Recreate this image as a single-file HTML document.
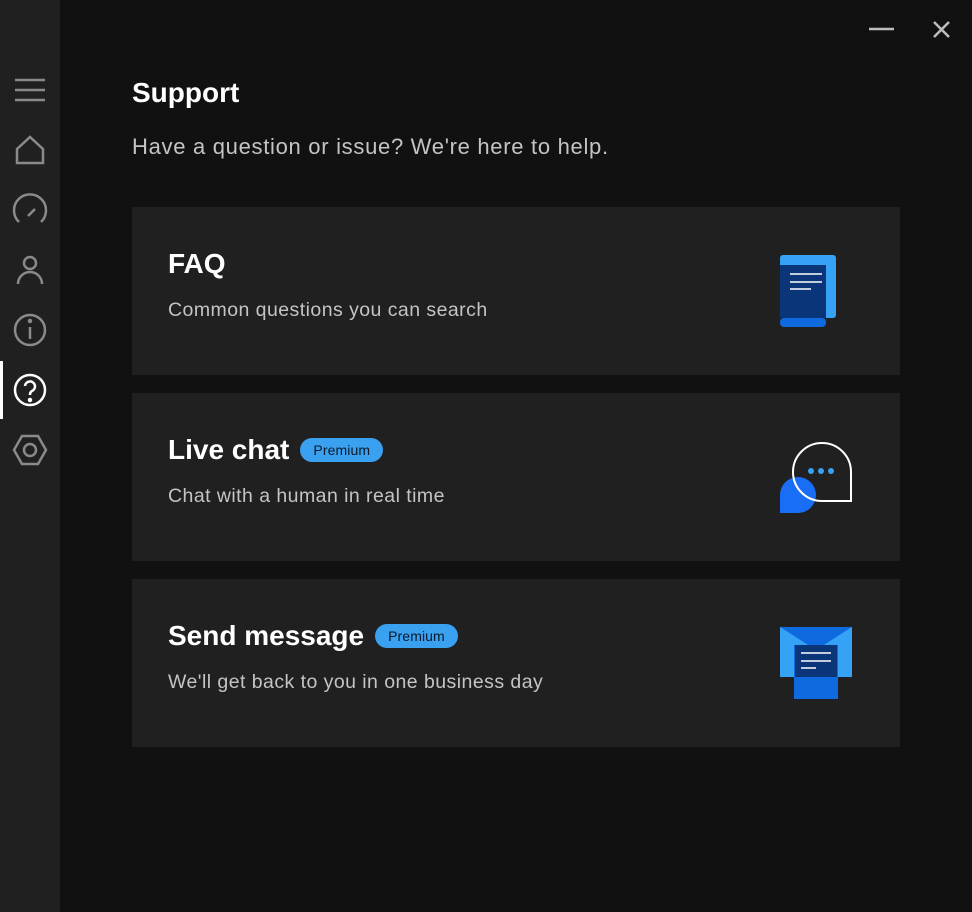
<!DOCTYPE html>
<html><head><meta charset="utf-8"><style>
body{margin:0;width:972px;height:912px;background:#111111;font-family:"Segoe UI","Liberation Sans",sans-serif;position:relative;overflow:hidden;color:#fff}
.side{position:absolute;left:0;top:0;width:60px;height:912px;background:#202020}
.card{position:absolute;left:132px;width:768px;height:168px;background:#202020}
.card h2{position:absolute;left:36px;top:41px;margin:0;font-size:28px;font-weight:600;display:flex;align-items:center}
.card p{position:absolute;left:36px;top:92px;margin:0;font-size:19.5px;color:#c4c4c4;letter-spacing:0.45px}
.badge{display:inline-block;background:#3aa0f0;color:#0b1a2a;font-size:14px;font-weight:400;border-radius:13px;padding:4px 13px;margin-left:11px;letter-spacing:0.1px}
svg{position:absolute}
</style></head><body>
<div class="side"></div>
<div style="position:absolute;left:0;top:361px;width:3px;height:58px;background:#fff"></div>
<svg style="left:0;top:0" width="60" height="480" fill="none" stroke="#8a8a8a" stroke-width="2.5">
<path d="M15 80H45M15 90H45M15 100H45"/>
<path d="M17 163V149L30 137L43 149V163Z"/>
<path d="M19 222A16 16 0 1 1 41 222"/><path d="M28 216L35 209"/>
<circle cx="30" cy="263" r="6"/><path d="M18 284A12 12 0 0 1 42 284"/>
<circle cx="30" cy="330" r="15"/><path d="M30 327V339"/><circle cx="30" cy="321" r="1" fill="#8a8a8a"/>
<circle cx="30" cy="390" r="15" stroke="#fff"/>
<path d="M25 386A5 5 0 1 1 32 391Q30 392 30 395" stroke="#fff"/><circle cx="30" cy="400" r="1" fill="#fff" stroke="#fff"/>
<path d="M22 436H38L46 450L38 464H22L14 450Z"/><circle cx="30" cy="450" r="6"/>
</svg>
<svg style="left:860;top:14" width="100" height="34" stroke="#bdbdbd" stroke-width="2.5"><path d="M9 15H34"/><path d="M74 8L89 23M89 8L74 23"/></svg>
<div style="position:absolute;left:132px;top:77px;font-size:28px;font-weight:600">Support</div>
<div style="position:absolute;left:132px;top:134px;font-size:22px;color:#c4c4c4;letter-spacing:0.7px">Have a question or issue? We're here to help.</div>
<div class="card" style="top:207px"><h2>FAQ</h2><p>Common questions you can search</p></div>
<div class="card" style="top:393px"><h2>Live chat<span class="badge">Premium</span></h2><p>Chat with a human in real time</p></div>
<div class="card" style="top:579px"><h2>Send message<span class="badge">Premium</span></h2><p>We'll get back to you in one business day</p></div>
<svg style="left:0;top:0" width="972" height="912">
<rect x="780" y="255" width="56" height="63" rx="3" fill="#35a2f5"/>
<rect x="780" y="265" width="46" height="53" fill="#0a3578"/>
<rect x="780" y="318" width="46" height="9" rx="4" fill="#0f6ae0"/>
<path d="M790 274H822M790 282H822M790 289H811" stroke="#fff" stroke-width="1.6"/>
<path d="M780 513V495A18 18 0 0 1 816 495A18 18 0 0 1 798 513Z" fill="#1a6ef5"/>
<path d="M851 501H822A29 29 0 0 1 793 472A29 29 0 0 1 851 472Z" fill="none" stroke="#fff" stroke-width="2"/>
<circle cx="811" cy="471" r="3" fill="#35a2f5"/><circle cx="821" cy="471" r="3" fill="#35a2f5"/><circle cx="831" cy="471" r="3" fill="#35a2f5"/>
<rect x="780" y="627" width="72" height="50" fill="#35a2f5"/>
<path d="M780 627H852L816 650Z" fill="#0f6ae0"/>
<rect x="794" y="645" width="44" height="54" fill="#0f6ae0"/>
<rect x="795" y="645" width="42" height="32" fill="#0a3578"/>
<path d="M801 653H831M801 661H831M801 668H816" stroke="#fff" stroke-width="1.6"/>
</svg>
</body></html>
